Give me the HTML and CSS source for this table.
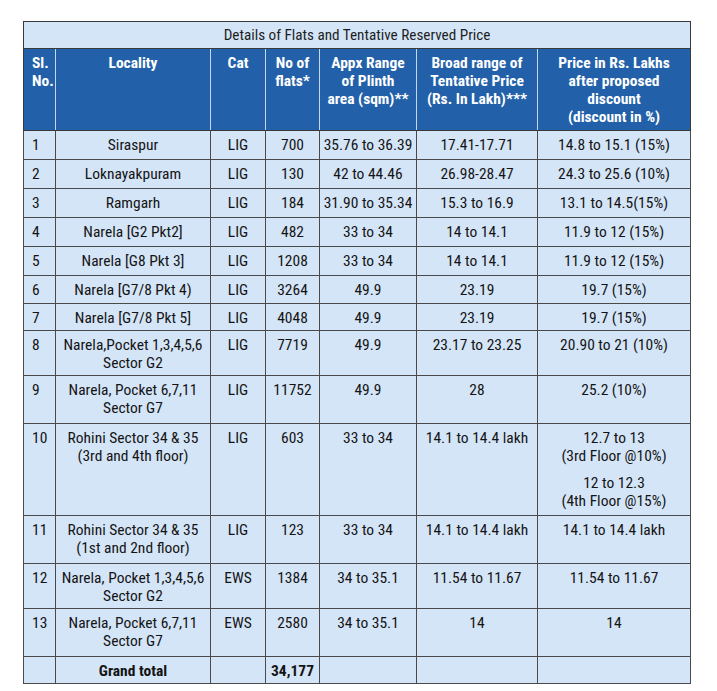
FILE: index.html
```html
<!DOCTYPE html>
<html>
<head>
<meta charset="utf-8">
<link rel="stylesheet" href="styles.css">
</head>
<body>
<table class="flats">
  <colgroup>
    <col class="c-sl"><col class="c-loc"><col class="c-cat"><col class="c-no"><col class="c-area"><col class="c-broad"><col class="c-price">
  </colgroup>
  <thead>
    <tr class="title-row"><th colspan="7">Details of Flats and Tentative Reserved Price</th></tr>
    <tr class="head-row">
      <th class="left">Sl.<br>No.</th>
      <th>Locality</th>
      <th>Cat</th>
      <th>No of<br>flats*</th>
      <th>Appx Range<br>of Plinth<br>area (sqm)**</th>
      <th>Broad range of<br>Tentative Price<br>(Rs. In Lakh)***</th>
      <th>Price in Rs. Lakhs<br>after proposed<br>discount<br>(discount in %)</th>
    </tr>
  </thead>
  <tbody>
    <tr><td class="left">1</td><td>Siraspur</td><td>LIG</td><td>700</td><td>35.76 to 36.39</td><td>17.41-17.71</td><td>14.8 to 15.1 (15%)</td></tr>
    <tr><td class="left">2</td><td>Loknayakpuram</td><td>LIG</td><td>130</td><td>42 to 44.46</td><td>26.98-28.47</td><td>24.3 to 25.6 (10%)</td></tr>
    <tr><td class="left">3</td><td>Ramgarh</td><td>LIG</td><td>184</td><td>31.90 to 35.34</td><td>15.3 to 16.9</td><td>13.1 to 14.5(15%)</td></tr>
    <tr><td class="left">4</td><td>Narela [G2 Pkt2]</td><td>LIG</td><td>482</td><td>33 to 34</td><td>14 to 14.1</td><td>11.9 to 12 (15%)</td></tr>
    <tr><td class="left">5</td><td>Narela [G8 Pkt 3]</td><td>LIG</td><td>1208</td><td>33 to 34</td><td>14 to 14.1</td><td>11.9 to 12 (15%)</td></tr>
    <tr class="short"><td class="left">6</td><td>Narela [G7/8 Pkt 4)</td><td>LIG</td><td>3264</td><td>49.9</td><td>23.19</td><td>19.7 (15%)</td></tr>
    <tr class="shorter"><td class="left">7</td><td>Narela [G7/8 Pkt 5]</td><td>LIG</td><td>4048</td><td>49.9</td><td>23.19</td><td>19.7 (15%)</td></tr>
    <tr class="two"><td class="left">8</td><td>Narela,Pocket 1,3,4,5,6<br>Sector G2</td><td>LIG</td><td>7719</td><td>49.9</td><td>23.17 to 23.25</td><td>20.90 to 21 (10%)</td></tr>
    <tr class="two tall"><td class="left">9</td><td>Narela, Pocket 6,7,11<br>Sector G7</td><td>LIG</td><td>11752</td><td>49.9</td><td>28</td><td>25.2 (10%)</td></tr>
    <tr><td class="left">10</td><td>Rohini Sector 34 &amp; 35<br>(3rd and 4th floor)</td><td>LIG</td><td>603</td><td>33 to 34</td><td>14.1 to 14.4 lakh</td><td><span class="para">12.7 to 13<br>(3rd Floor @10%)</span><span class="para">12 to 12.3<br>(4th Floor @15%)</span></td></tr>
    <tr class="two tall"><td class="left">11</td><td>Rohini Sector 34 &amp; 35<br>(1st and 2nd floor)</td><td>LIG</td><td>123</td><td>33 to 34</td><td>14.1 to 14.4 lakh</td><td>14.1 to 14.4 lakh</td></tr>
    <tr class="two"><td class="left">12</td><td>Narela, Pocket 1,3,4,5,6<br>Sector G2</td><td>EWS</td><td>1384</td><td>34 to 35.1</td><td>11.54 to 11.67</td><td>11.54 to 11.67</td></tr>
    <tr class="two tall"><td class="left">13</td><td>Narela, Pocket 6,7,11<br>Sector G7</td><td>EWS</td><td>2580</td><td>34 to 35.1</td><td>14</td><td>14</td></tr>
    <tr class="total shorter"><td></td><td class="bold">Grand total</td><td></td><td class="bold">34,177</td><td></td><td></td><td></td></tr>
  </tbody>
</table>
</body>
</html>
```
FILE: styles.css
```css
html, body {
  margin: 0;
  padding: 0;
  background: #ffffff;
}
body {
  padding: 21px 0 0 23px;
  font-family: "Roboto Condensed", Roboto, "Liberation Sans", Arial, sans-serif;
  color: #141414;
}
.flats {
  border-collapse: collapse;
  table-layout: fixed;
  width: 667px;
  font-size: 15.5px;
  line-height: 18px;
  border: 1.5px solid #3a3a3a;
}
.c-sl { width: 32px; }
.c-loc { width: 155px; }
.c-cat { width: 55px; }
.c-no { width: 54px; }
.c-area { width: 97px; }
.c-broad { width: 121px; }
.c-price { width: 153px; }

.title-row th {
  background: #d4e5f8;
  font-weight: normal;
  color: #1e1e1e;
  height: 26px;
  padding: 0;
  text-align: center;
  font-size: 15.2px;
  border: 1px solid #3a3a3a;
  vertical-align: middle;
}
.head-row th {
  background: #2261a9;
  color: #ffffff;
  font-weight: bold;
  text-align: center;
  vertical-align: top;
  padding: 5px 2px 4px;
  height: 71px;
  white-space: nowrap;
  border-left: 1px solid #c5d7ef;
  border-right: 1px solid #c5d7ef;
  border-bottom: 1px solid #3a3a3a;
  border-top: 1px solid #3a3a3a;
}
.head-row th:first-child { border-left-color: #3a3a3a; }
.head-row th:last-child { border-right-color: #3a3a3a; }
.head-row th.left { text-align: left; padding-left: 8px; }

tbody td {
  background: #d4e5f8;
  border: 1px solid #4a4a4a;
  text-align: center;
  vertical-align: top;
  padding: 5px 2px 5px;
  white-space: nowrap;
}
tbody td.left { text-align: left; padding-left: 8px; }
tbody tr.short td { padding-bottom: 4px; }
tbody tr.shorter td { padding-bottom: 3px; }
tbody tr.two td { padding-bottom: 3px; }
tbody tr.tall td { padding-bottom: 6px; }
.para { display: block; }
.para + .para { margin-top: 9px; }
.bold { font-weight: bold; }
```
